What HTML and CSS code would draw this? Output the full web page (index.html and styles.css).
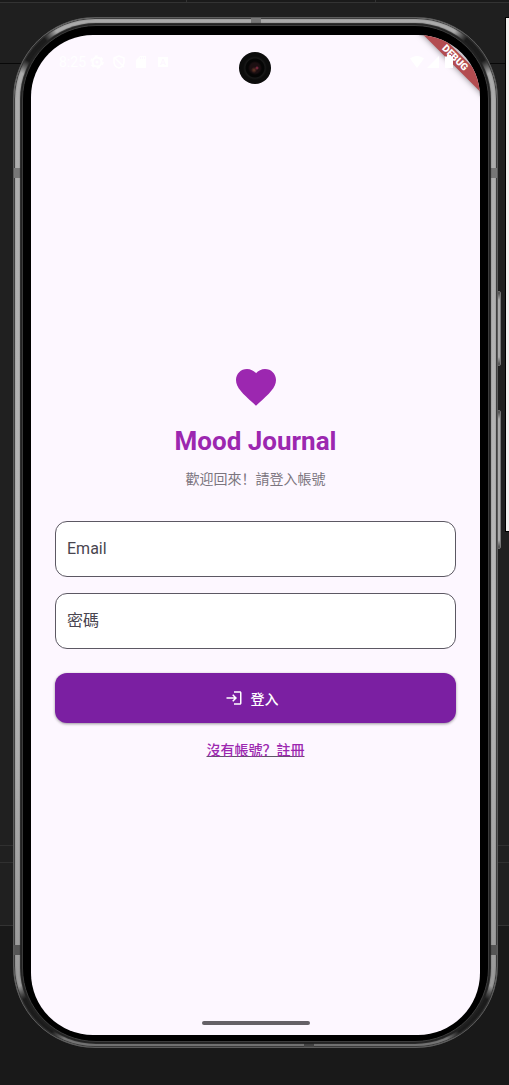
FILE: index.html
```html
<!DOCTYPE html>
<html lang="zh-Hans">
<head>
<meta charset="utf-8">
<meta name="viewport" content="width=device-width, initial-scale=1">
<title>Mood Journal</title>
<link rel="stylesheet" href="styles.css">
</head>
<body class="desktop">
<div class="side-window"></div>
<div class="phone">
  <span class="key key-power"></span>
  <span class="key key-volume"></span>
  <div class="rim">
    <span class="band band-top"></span>
    <span class="band band-bottom"></span>
    <span class="band band-left band-upper"></span>
    <span class="band band-right band-upper"></span>
    <span class="band band-left band-lower"></span>
    <span class="band band-right band-lower"></span>
    <div class="bezel">
      <div class="screen">
        <header class="status">
          <div class="status-group">
            <span class="clock">8:25</span>
            <svg class="status-icon" viewBox="0 0 14 14"><circle cx="7" cy="7" r="4.5" fill="none" stroke="currentColor" stroke-width="2"/><circle cx="7" cy="7" r="6" fill="none" stroke="currentColor" stroke-width="1.5" stroke-dasharray="3 3.3"/><circle cx="7" cy="7" r="1.5" fill="currentColor"/></svg>
            <svg class="status-icon" viewBox="0 0 14 14" fill="none" stroke="currentColor" stroke-width="1.5"><path d="M7 1L2 3v4c0 3 2 5.200 5 6c3-.8 5-3 5-6V3zM2 2l10 10"/></svg>
            <svg class="status-icon" viewBox="0 0 14 14"><path fill="currentColor" fill-rule="evenodd" d="M6 1h6v12H2V5zM6 2v2h1V2zM8 2v2h1V2zM10 2v2h1V2z"/></svg>
            <svg class="status-icon" viewBox="0 0 14 14"><path fill="currentColor" fill-rule="evenodd" d="M2 2h10v10H2zM6.300 4L4 10h1.300l.5-1.300h2.400L8.700 10H10L7.700 4zM6.200 7.600L7 5.400l.8 2.200z"/></svg>
          </div>
          <div class="status-group status-right">
            <svg class="status-icon" viewBox="0 0 14 14"><path fill="currentColor" d="M0 3.500C4 0 10 0 14 3.500L7 13z"/></svg>
            <svg class="status-icon" viewBox="0 0 14 14"><path fill="currentColor" d="M13 1v12H1z"/></svg>
            <svg class="status-icon" viewBox="0 0 14 14"><path fill="currentColor" d="M5 0h4v1.500h2V13H3V1.500h2z"/></svg>
          </div>
        </header>
        <main class="login">
          <svg class="heart" viewBox="0 0 24 24" aria-hidden="true"><path fill="currentColor" d="M12 21.350l-1.450-1.320C5.400 15.360 2 12.280 2 8.500 2 5.420 4.420 3 7.500 3c1.740 0 3.410.81 4.500 2.090C13.090 3.810 14.760 3 16.500 3 19.580 3 22 5.420 22 8.500c0 3.780-3.400 6.860-8.550 11.540L12 21.350z"/></svg>
          <h1 class="title">Mood Journal</h1>
          <p class="subtitle">歡迎回來！請登入帳號</p>
          <form class="form">
            <div class="field">
              <input class="field-input" id="email" type="email" placeholder=" ">
              <label class="field-label" for="email">Email</label>
            </div>
            <div class="field">
              <input class="field-input" id="password" type="password" placeholder=" ">
              <label class="field-label" for="password">密碼</label>
            </div>
            <button class="submit" type="button">
              <svg class="submit-icon" viewBox="0 0 24 24" aria-hidden="true"><path fill="currentColor" d="M11 7L9.600 8.400l2.600 2.600H2v2h10.200l-2.600 2.600L11 17l5-5-5-5zm9 12h-8v2h8c1.100 0 2-.9 2-2V5c0-1.100-.9-2-2-2h-8v2h8v14z"/></svg>
              登入
            </button>
          </form>
          <a class="register" href="#">沒有帳號？註冊</a>
        </main>
        <div class="camera"></div>
        <div class="debug">DEBUG</div>
        <div class="home-bar"></div>
      </div>
    </div>
  </div>
</div>
</body>
</html>
```
FILE: styles.css
```css
* {
  box-sizing: border-box;
}

.desktop {
  margin: 0;
  min-height: 100vh;
  display: flex;
  padding: 17px 11px 37px 13px;
  position: relative;
  font-family: Roboto, "Noto Sans CJK SC", sans-serif;
  background:
    linear-gradient(#333, #333) 186px 0 / 1px 2px no-repeat,
    linear-gradient(#333, #333) 375px 0 / 1px 2px no-repeat,
    linear-gradient(#1a1a1a 2px, #333 2px 3px, #1f1f1f 3px 63px, #080808 63px 64px, #202020 64px 845px, #303030 845px 846px, #202020 846px 862px, #303030 862px 863px, #202020 863px 925px, #333 925px 926px, #191919 926px);
}

.side-window {
  position: absolute;
  right: 0;
  top: 17px;
  width: 4px;
  height: 515px;
  background: #f3efee;
  border: 1px solid #000;
  border-right: 0;
}

.phone {
  flex: 1;
  display: flex;
  position: relative;
}

.key {
  position: absolute;
  right: -3px;
  width: 4px;
  border: 1px solid #777;
  border-radius: 2px;
  background: linear-gradient(#444, #aaa 8px calc(100% - 8px), #444);
}

.key-power {
  top: 274px;
  height: 75px;
}

.key-volume {
  top: 393px;
  height: 139px;
}

.rim {
  flex: 1;
  display: flex;
  position: relative;
  padding: 7px 8px 5px;
  border: 1px solid #5c5c5c;
  border-radius: 82px;
  background:
    radial-gradient(circle at 20px 30px, #1c1c1c 14px, transparent 28px),
    radial-gradient(circle at calc(100% - 20px) 30px, #1c1c1c 14px, transparent 28px),
    radial-gradient(circle at 20px calc(100% - 28px), #1c1c1c 22px, transparent 36px),
    radial-gradient(circle at calc(100% - 20px) calc(100% - 28px), #1c1c1c 22px, transparent 36px),
    linear-gradient(#aaa, #b8b8b8 60%, #999 94%, #777);
  box-shadow: inset 0 0 1px 1px #333;
}

.band {
  position: absolute;
  background: #777;
}

.band-top,
.band-bottom {
  width: 10px;
  height: 7px;
}

.band-top {
  top: 0;
  left: 50%;
  margin-left: -5px;
}

.band-bottom {
  bottom: 0;
  left: 60%;
  height: 5px;
  background: #444;
}

.band-left,
.band-right {
  width: 7px;
  height: 10px;
}

.band-left {
  left: 0;
}

.band-right {
  right: 0;
}

.band-upper {
  top: 150px;
}

.band-lower {
  bottom: 92px;
  background: #555;
}

.bezel {
  flex: 1;
  display: flex;
  position: relative;
  padding: 9px 8px 6px;
  border: 1px solid #3c3c3c;
  border-radius: 74px;
  background: #000;
  box-shadow: 0 0 1px 2px #222;
}

.screen {
  flex: 1;
  min-width: 0;
  display: flex;
  flex-direction: column;
  position: relative;
  overflow: hidden;
  border-radius: 62px;
  background: #fdf7ff;
}

.status {
  display: flex;
  align-items: center;
  justify-content: space-between;
  height: 54px;
  padding: 0 24px 0 28px;
  color: #fff;
}

.status-group {
  display: flex;
  align-items: center;
  gap: 8px;
}

.status-right {
  gap: 2px;
  position: relative;
  z-index: 2;
}

.clock {
  font-size: 14px;
  line-height: 16px;
  margin-right: -4px;
}

.status-icon {
  width: 14px;
  height: 14px;
}

.login {
  flex: 1;
  display: flex;
  flex-direction: column;
  align-items: center;
  justify-content: center;
  padding: 0 24px;
}

.heart {
  width: 48px;
  height: 48px;
  color: #9c27b0;
}

.title {
  margin: 12px 0 8px;
  font-size: 26px;
  line-height: 36px;
  font-weight: 700;
  color: #9c27b0;
}

.subtitle {
  margin: 0 0 30px;
  font-size: 14px;
  line-height: 24px;
  font-weight: 400;
  color: #7b757e;
}

.form {
  align-self: stretch;
  display: flex;
  flex-direction: column;
  gap: 16px;
}

.field {
  display: grid;
  align-items: center;
}

.field-input,
.field-label {
  grid-area: 1 / 1;
}

.field-input {
  width: 100%;
  height: 56px;
  padding: 0 12px;
  border: 1px solid #5c5863;
  border-radius: 12px;
  background: #fff;
  font: inherit;
  font-size: 16px;
  color: #1d1b20;
}

.field-label {
  padding: 0 12px;
  font-size: 16px;
  line-height: 24px;
  color: #49454f;
  pointer-events: none;
}

.field-input:not(:placeholder-shown) + .field-label {
  visibility: hidden;
}

.submit {
  display: flex;
  align-items: center;
  justify-content: center;
  gap: 8px;
  height: 50px;
  margin-top: 8px;
  padding: 0 24px 0 16px;
  border: 0;
  border-radius: 12px;
  background: #7b1fa2;
  color: #fff;
  font: inherit;
  font-size: 14px;
  font-weight: 500;
  box-shadow: 0 1px 3px rgba(0, 0, 0, 0.4);
}

.submit-icon {
  width: 18px;
  height: 18px;
}

.register {
  margin-top: 16px;
  font-size: 14px;
  line-height: 22px;
  font-weight: 500;
  color: #9c27b0;
  text-decoration: underline #5c5863;
}

.camera {
  position: absolute;
  top: 17px;
  left: 50%;
  width: 32px;
  height: 32px;
  margin-left: -17px;
  border-radius: 50%;
  background:
    radial-gradient(circle at 18px 16px, #a03050 0, transparent 2px),
    radial-gradient(circle at 15px 18px, #6a3828 0, transparent 3px),
    radial-gradient(circle, #1c0f12 0 5px, #050505 7px 9px, #181818 10px, #0c0c0c 12px);
}

.debug {
  position: absolute;
  z-index: 1;
  top: 17px;
  right: -35px;
  width: 120px;
  height: 12px;
  transform: rotate(45deg);
  background: #b34c50;
  color: #fff;
  font-size: 10px;
  line-height: 12px;
  font-weight: 900;
  text-align: center;
  box-shadow: 0 0 6px rgba(0, 0, 0, 0.5);
}

.home-bar {
  position: absolute;
  bottom: 10px;
  left: 50%;
  width: 108px;
  height: 4px;
  margin-left: -54px;
  border-radius: 2px;
  background: #656167;
}
```
